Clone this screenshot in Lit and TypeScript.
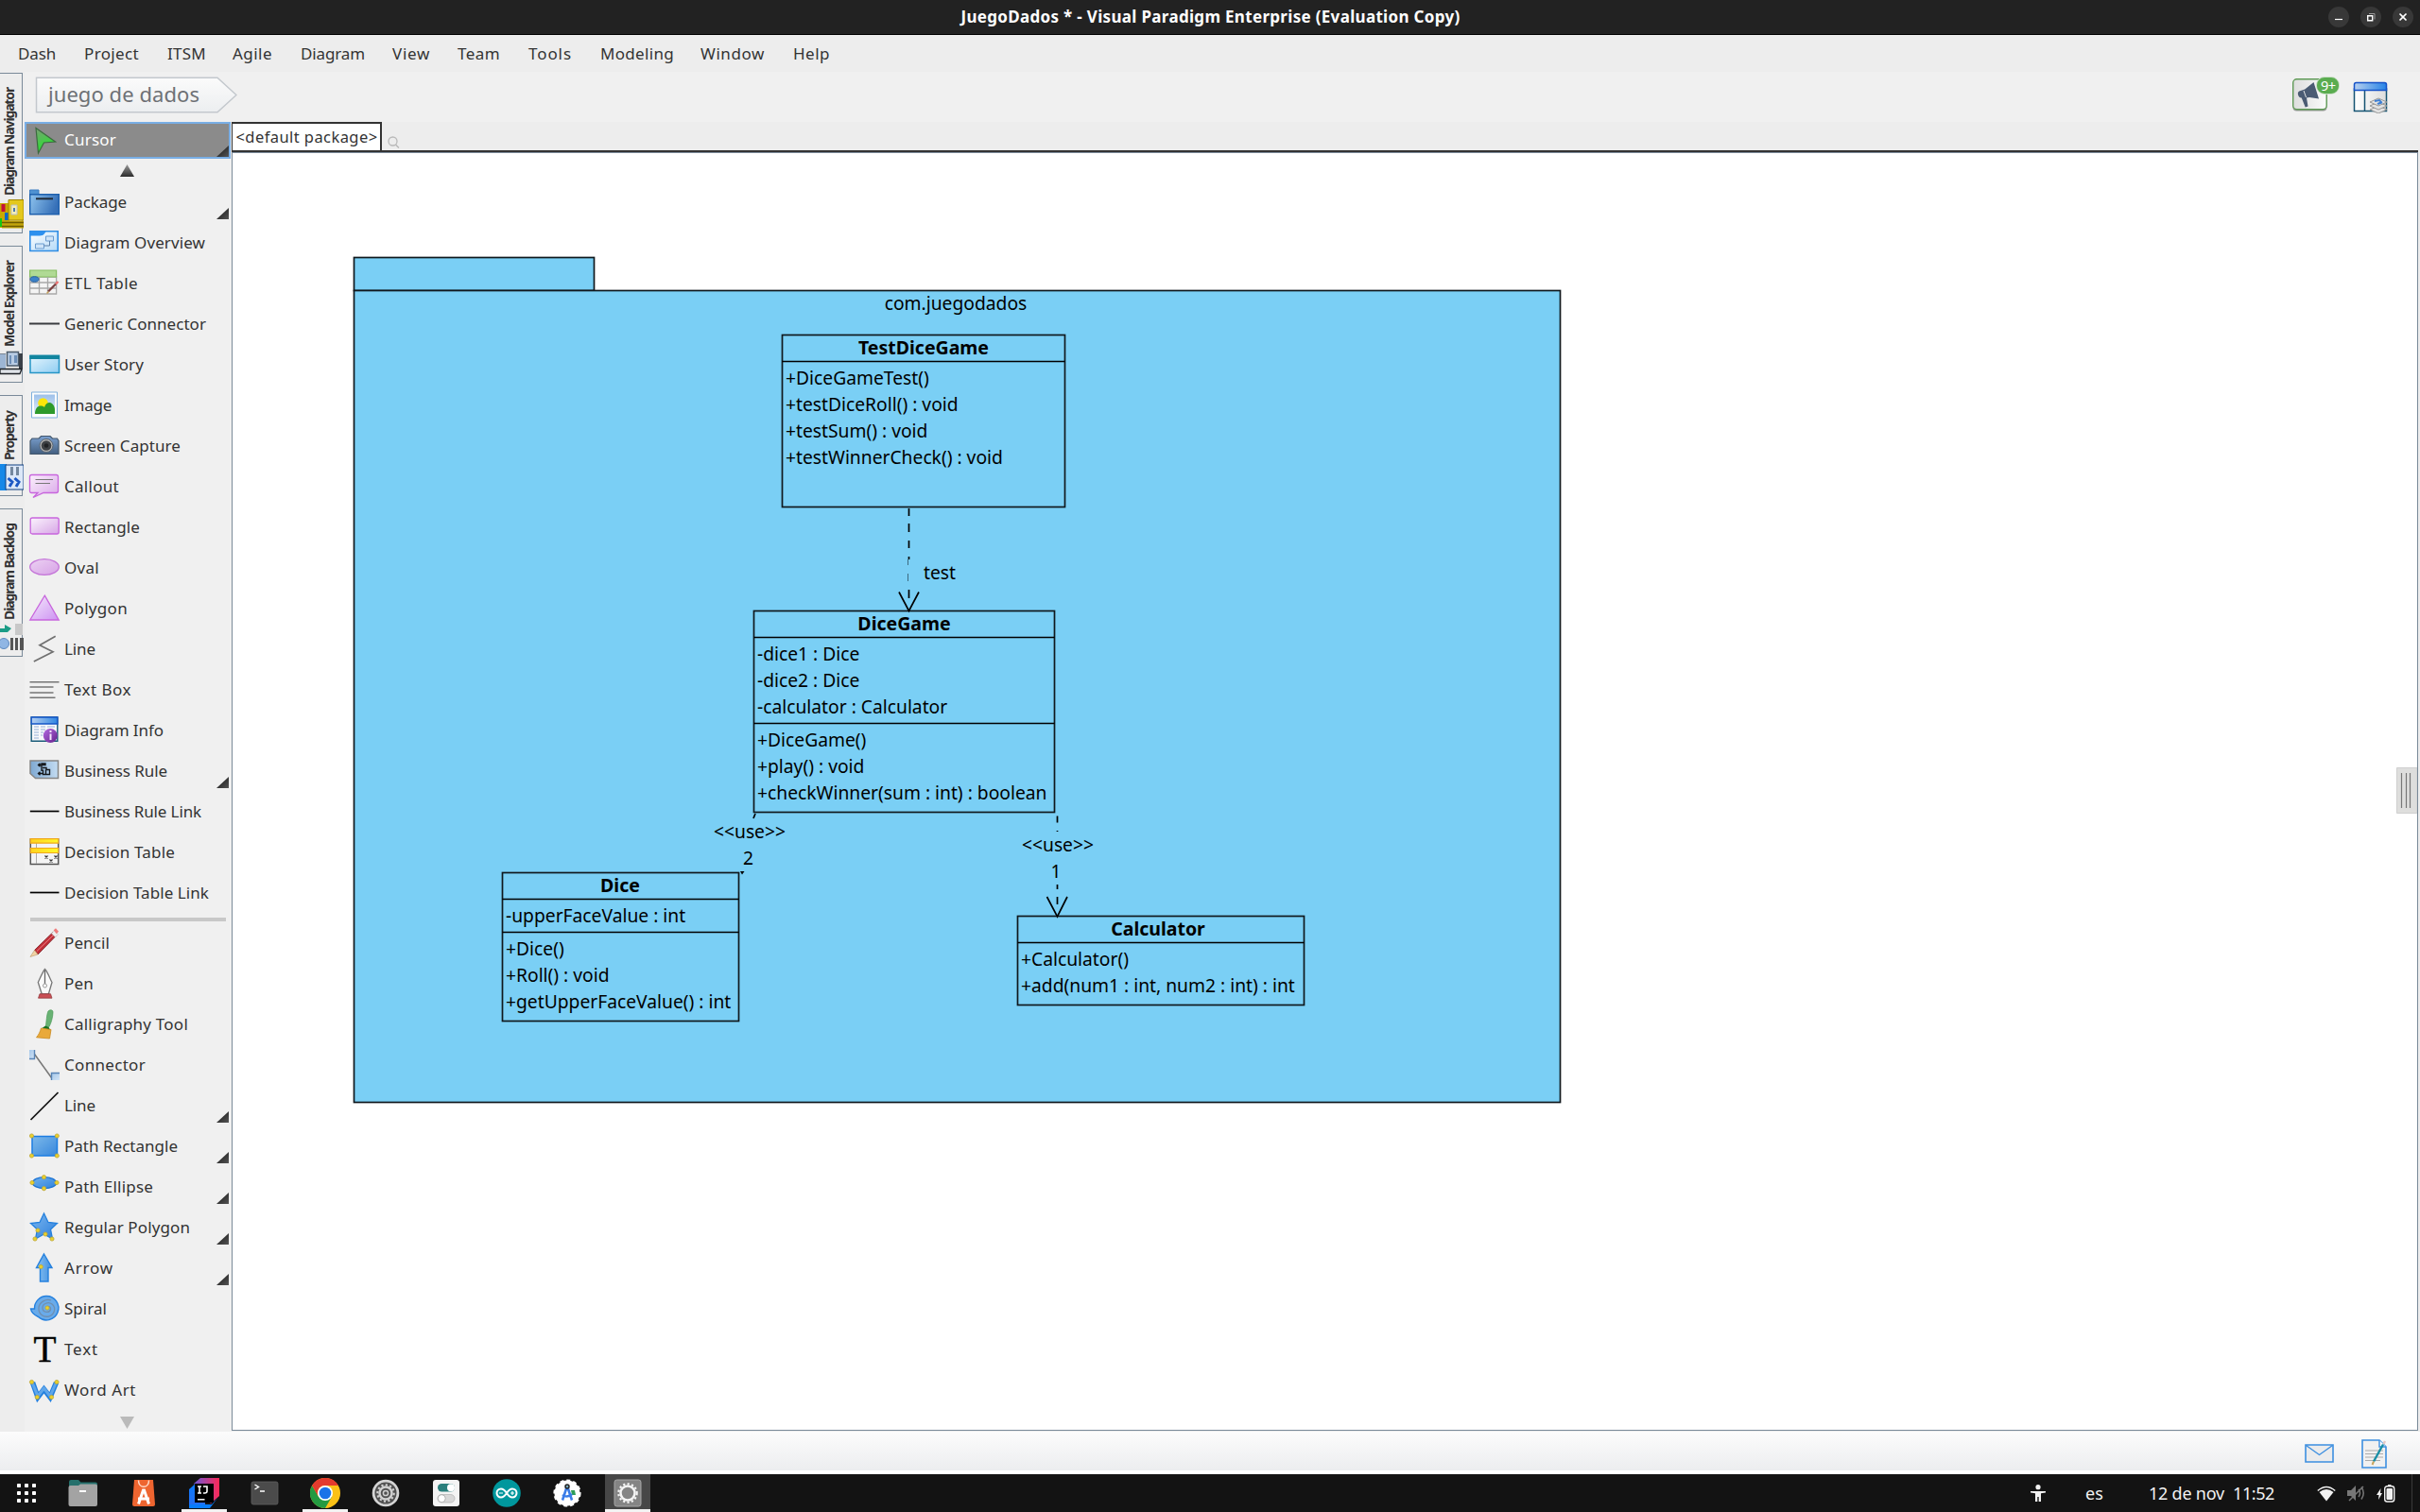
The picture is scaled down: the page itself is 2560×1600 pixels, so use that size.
import { LitElement, html, svg, css, nothing, TemplateResult, SVGTemplateResult } from "lit";
import { customElement, property } from "lit/decorators.js";

const UI_FONT = '"Noto Sans", "Open Sans", sans-serif';

const ruler = document.createElement("canvas").getContext("2d")!;

/** Letter spacing that makes a label occupy the given advance width. */
function tracking(text: string, width: number, size: number, weight = 400): string {
  ruler.font = `${weight} ${size}px ${UI_FONT}`;
  return `letter-spacing:${((width - ruler.measureText(text).width) / text.length).toFixed(3)}px`;
}

/* ---------- shared gradients ---------- */
const grad = (id: string, a: string, b: string, x2 = 1, y2 = 1) =>
  svg`<linearGradient id=${id} x1="0" y1="0" x2=${x2} y2=${y2}><stop offset="0" stop-color=${a}/><stop offset="1" stop-color=${b}/></linearGradient>`;

const knob = (x: number, y: number) =>
  svg`<circle cx=${x} cy=${y} r="2.1" fill="#ead12c" stroke="#bda638" stroke-width=".8"/>`;

const icons: Record<string, SVGTemplateResult> = {
  package: svg`<defs>${grad("g", "#8fc4ee", "#3670b8", 1, 0.3)}</defs>
    <path d="M.5 3h9.5v5h-9.5z" fill="#4f92d2" stroke="#3c7cc0"/>
    <path d="M.7 7.7h30.6v21.1H.7z" fill="url(#g)" stroke="#1f61ae" stroke-width="1.4"/>
    <path d="M7 12.3h18" stroke="#222c38" stroke-width="2"/>`,
  overview: svg`<defs>${grad("g", "#ffffff", "#b4daf8")}</defs>
    <path d="M.8 3.7h29.4v20.8H.8z" fill="url(#g)" stroke="#2f8de4" stroke-width="1.6"/>
    <path d="M1 3.5h17c-2 2-2 5-7 5H1z" fill="#2d90ee"/>
    <path d="M17.5 9h8v5h-8zM6.500 17h9v5h-9z" fill="#cfe4f8" stroke="#6b9cd0"/>
    <path d="M21.500 14v5h-6" fill="none" stroke="#5a7fa8"/>`,
  etl: svg`<path d="M.6 9h28v18H.6z" fill="#f4f4f4" stroke="#a8a8a8" stroke-width="1.3"/>
    <path d="M.6 2h28v7H.6z" fill="#b0da94" stroke="#86bd62" stroke-width="1.200"/>
    <path d="M1 15h28M1 21h28M10.500 9v18M19.500 9v18" stroke="#a8a8a8" stroke-width="1.3"/>
    <ellipse cx="5.500" cy="11.500" rx="4.500" ry="2.800" fill="#3c82c8" stroke="#225f9e"/>
    <path d="M20 24.500l8-8" stroke="#7a4040" stroke-width="2.300"/><path d="M28 16.500l2.500-2.500" stroke="#ee6f6f" stroke-width="2.300"/><path d="M18.500 26.500l2-2" stroke="#c9a45c" stroke-width="1.500"/>`,
  connector: svg`<path d="M0 15.500h32" stroke="#3a3c40" stroke-width="2"/>`,
  story: svg`<defs>${grad("g", "#e6f5fd", "#8fcdf2")}</defs>
    <path d="M1 6.500h30.500v18H1z" fill="url(#g)" stroke="#2595c6" stroke-width="1.500"/>
    <path d="M.3 5.700h31.700v4.300H.3z" fill="#11859f"/>`,
  image: svg`<defs>${grad("g", "#9cc0ea", "#e6effa", 0, 1)}</defs>
    <path d="M2.500 2h27v27h-27z" fill="#fdfdfd" stroke="#7fb0dc"/>
    <path d="M5 4.500h22v20.500H5z" fill="url(#g)"/>
    <circle cx="14.500" cy="13.500" r="5.300" fill="#fbe60a"/>
    <path d="M6 25c0-6 3-8.500 6-8.500 2 0 3 .5 4 1.500 1-3.500 3-5 5.500-5 3 0 5.500 4 5.500 7v5z" fill="#2e9a2a"/>`,
  camera: svg`<defs>${grad("g", "#7ba0cf", "#435f80", 0, 1)}</defs>
    <path d="M1 10.500l2-2.500h7l2.500-2.500h9.500L24.500 8h5l1.500 2.500v14H1z" fill="url(#g)" stroke="#43576c" stroke-width="1.200"/>
    <circle cx="18" cy="15.500" r="7" fill="#b5b5b5" stroke="#5a6673"/><circle cx="18" cy="15.500" r="5.300" fill="#3e4144"/><circle cx="18" cy="15.500" r="2.300" fill="#202224"/>`,
  callout: svg`<defs>${grad("g", "#fbf1fd", "#d9a7e8")}</defs>
    <path d="M2.500 3.500h26q2 0 2 2v15q0 2-2 2H15L4 27.500l5-5H2.500q-2 0-2-2v-15q0-2 2-2z" fill="url(#g)" stroke="#c866dd" stroke-width="1.300"/>
    <path d="M6.500 8.500h18.500M6.500 12.500h15.500" stroke="#777" stroke-width="1.200"/>`,
  rect: svg`<defs>${grad("g", "#fbf4fd", "#d7a5e6")}</defs>
    <rect x="1.200" y="6" width="30" height="17" rx="2" fill="url(#g)" stroke="#c866dd" stroke-width="1.300"/>`,
  oval: svg`<defs>${grad("g", "#ecd2f3", "#d7a2e6")}</defs>
    <ellipse cx="16" cy="15" rx="15.300" ry="8.300" fill="url(#g)" stroke="#c475d8" stroke-width="1.300"/>`,
  polygon: svg`<defs>${grad("g", "#f6ecfc", "#cd92f2")}</defs>
    <path d="M16.300 2.200L31.200 28H.8z" fill="url(#g)" stroke="#c866dd" stroke-width="1.300"/>`,
  zigzag: svg`<path d="M27.700 2.200L11 11.700l14 7L4.800 29" fill="none" stroke="#707070" stroke-width="1.700"/>`,
  textbox: svg`<path d="M.5 7.800H31.500M.5 13h25M.5 19h25M.5 24.200h27" stroke="#757575" stroke-width="1.400"/>`,
  info: svg`<defs>${grad("g", "#b5cff0", "#2f86e2", 1, 0)}${grad("h", "#b46ae0", "#63208c")}</defs>
    <path d="M2.200 2h27.600v25.300H2.200z" fill="#f7f8fa" stroke="#185a78" stroke-width="1.400"/>
    <path d="M2.200 2h27.600v7H2.200z" fill="url(#g)" stroke="#1556c8" stroke-width="1.400"/>
    <path d="M5 12h5M12 12h5M5 15h5M12 15h5M5 18h5M5 21h5M5 24h5M19 12h8M12 18h3M12 21h2" stroke="#b6c8e2" stroke-width="1.500"/>
    <circle cx="22.300" cy="21.500" r="7.500" fill="url(#h)"/><path d="M22.500 19.500v6.500M22.500 16v2" stroke="#f2e4fa" stroke-width="2"/>`,
  rule: svg`<defs>${grad("g", "#7fa9d2", "#c3dcf2", 1, 0)}</defs>
    <path d="M1 5h29.500v18.500H6.500L1 18.500z" fill="url(#g)" stroke="#858585" stroke-width="1.500"/>
    <path d="M9 9.500h8v-1.500h-4v8M9 18.500h5M14 12.500h4v2h3.500v5h-7v-5M17.500 14.500v5M11.500 7.800l-2 1.700 2 1.700M11.500 16.800l-2 1.700 2 1.700" fill="none" stroke="#15181c" stroke-width="1.400"/>`,
  link: svg`<path d="M.8 15.500h30.700" stroke="#000" stroke-width="1.700"/>`,
  decision: svg`<defs>${grad("g", "#ffd21e", "#fffa2a", 1, 0)}</defs>
    <path d="M1.300 2h29.400v26.500H1.300z" fill="#f4f4f4" stroke="#555" stroke-width="1.500"/>
    <path d="M7.500 2v26" stroke="#aaa"/>
    <path d="M1.200 1.700h29.600v4.500H1.200zM1.200 11.500h29.600v5H1.200z" fill="url(#g)" stroke="#f0a81e" stroke-width="1.200"/>
    <path d="M16.500 19.500l3 3m0-3l-3 3M26.500 19.500l3 3m0-3l-3 3M21.500 23.500l3 3m0-3l-3 3" stroke="#333" stroke-width="1.200"/>`,
  pencil: svg`<path d="M5.500 23.500L25 4.500l3.500 3.500L9 28z" fill="#c22f38" stroke="#83252b" stroke-width=".9"/>
    <path d="M8 24.500L26 7" stroke="#ef8288" stroke-width="1"/>
    <path d="M23.500 5.800l3-3 4 4-3 3z" fill="#efefef" stroke="#bdbdbd" stroke-width=".6"/><path d="M25.700 2.200L28 .2l3 3.500-2.200 2.500z" fill="#ef7d7d"/>
    <path d="M5.500 23.500L1 30.500 9 28z" fill="#f1d3a4" stroke="#b8996a" stroke-width=".6"/>`,
  pen: svg`<path d="M16.500.5C14 3.500 11 11 9.300 14.500l4 12.500h7l3.700-12.500C22 11 19.500 3.500 16.500.5z" fill="#fafafa" stroke="#777" stroke-width="1.300"/>
    <path d="M16.500 2v14.500" stroke="#666" stroke-width="1.300"/><circle cx="16.500" cy="18" r="2" fill="#fff" stroke="#999"/>
    <path d="M11 26.700h11.500l1.500 4.500H9.500z" fill="#c94f55" stroke="#8d3338" stroke-width=".7"/>`,
  brush: svg`<path d="M20 2c2-2 5-1.500 5 1 0 5-2 12-4 15.500-1.500 2-4 1.500-3.500-.5C18 13 18.500 5 20 2z" fill="#68b273" stroke="#4a9a57" stroke-width=".7"/>
    <path d="M17 17.500l3.500 1.500 2 3.500-9-2.500z" fill="#157020"/>
    <path d="M12.500 20l10.500 1.500-1.500 9.500-14-1.200c2.500-2.800 4-6.300 5-9.800z" fill="#e9a93a" stroke="#c98a1f" stroke-width=".8"/>`,
  nodes: svg`<defs>${grad("g", "#a5c8ea", "#d2e3f5")}</defs>
    <path d="M5.500 4.500l18 25" stroke="#777" stroke-width="1.500"/>
    <path d="M0 0h5.500v9.500H0z" fill="url(#g)"/><path d="M5.500 0v9.500H0" fill="none" stroke="#5884b6" stroke-width="1.400"/>
    <path d="M23.500 24.500H32V32h-8.500z" fill="url(#g)"/><path d="M32 24.500h-8.500V32" fill="none" stroke="#5884b6" stroke-width="1.400"/>`,
  line: svg`<path d="M1.500 31L30.500 2" stroke="#111" stroke-width="1.700"/>`,
  prect: svg`<defs>${grad("g", "#7db9ea", "#3787dc")}</defs>
    <path d="M3 5.500h26.500v20.500H3z" fill="url(#g)" stroke="#1c7de2" stroke-width="1.500"/>${knob(2.5, 5)}${knob(29.3, 5)}${knob(2.5, 26)}${knob(29.3, 26)}`,
  pellipse: svg`<defs>${grad("g", "#6fb1ec", "#2f82dc")}</defs>
    <ellipse cx="16" cy="11.700" rx="12.500" ry="6" fill="url(#g)" stroke="#1c74d4" stroke-width="1.300"/>${knob(3, 11.500)}${knob(29, 11.500)}${knob(15.500, 5.700)}${knob(15.500, 17.700)}`,
  star: svg`<defs>${grad("g", "#7db7ee", "#2c7fdc")}</defs>
    <path d="M15.500 1l4.500 9.500 9.500 1-7 6.500 2 10-9-5-9 5 2-10-7-6.500 9.500-1z" fill="url(#g)" stroke="#2480de" stroke-width="1.300"/>${knob(9, 19)}${knob(17, 23)}${knob(6, 28)}${knob(24, 28)}`,
  arrow: svg`<defs>${grad("g", "#8cc3f2", "#3f8fe0", 1, 0)}</defs>
    <path d="M15.500 1L24 15.500h-4V30h-8.500V15.500H7.500z" fill="url(#g)" stroke="#2480de" stroke-width="1.400"/>${knob(12.300, 14.500)}`,
  spiral: svg`<path d="M18 2.500a12.700 12.700 0 1 1-8.500 22C5 22.500 2 19 1.500 16h4C5 9 11 2.500 18 2.500z" fill="#69abea" stroke="#2480de" stroke-width="1.400"/>
    <path d="M18 15c1-3 5-1 4.500 1.500-.8 4-8 4-8.500-1-.3-5 6-7.500 10-4.500 5 4 2.500 11.500-3.500 13-6 1.200-11-3-10.500-9 .5-6.500 8-10 13-8" fill="none" stroke="#6f8fb0" stroke-width="1.300"/>${knob(19, 15)}`,
  text: svg`<text x="4.500" y="28.500" font-family="'Liberation Serif', serif" font-size="41" textLength="24" lengthAdjust="spacingAndGlyphs" fill="#000" stroke="#000" stroke-width=".5">T</text>`,
  wordart: svg`<path d="M3.500 8l5.500 15.500 6.500-8.500 6.500 8.500L28.500 8" fill="none" stroke="#2480de" stroke-width="5.500"/><path d="M3.500 9l5.500 13.500 6.500-8.500 6.500 8.500L28 9" fill="none" stroke="#5fa6ea" stroke-width="3"/>${knob(2.500, 7.500)}${knob(29, 7.500)}${knob(8.300, 23.500)}${knob(23.500, 23.500)}`,
};

type Tool = [icon: string, label: string, width: number, more?: boolean];

const tools: Tool[] = [
  ["package", "Package", 66, true],
  ["overview", "Diagram Overview", 149],
  ["etl", "ETL Table", 78],
  ["connector", "Generic Connector", 150],
  ["story", "User Story", 84],
  ["image", "Image", 50],
  ["camera", "Screen Capture", 123],
  ["callout", "Callout", 58],
  ["rect", "Rectangle", 80],
  ["oval", "Oval", 37],
  ["polygon", "Polygon", 67],
  ["zigzag", "Line", 33],
  ["textbox", "Text Box", 71],
  ["info", "Diagram Info", 105],
  ["rule", "Business Rule", 109, true],
  ["link", "Business Rule Link", 145],
  ["decision", "Decision Table", 117],
  ["link", "Decision Table Link", 153],
];

const drawing: Tool[] = [
  ["pencil", "Pencil", 48],
  ["pen", "Pen", 31],
  ["brush", "Calligraphy Tool", 131],
  ["nodes", "Connector", 86],
  ["line", "Line", 33, true],
  ["prect", "Path Rectangle", 120, true],
  ["pellipse", "Path Ellipse", 94, true],
  ["star", "Regular Polygon", 133, true],
  ["arrow", "Arrow", 52, true],
  ["spiral", "Spiral", 45],
  ["text", "Text", 36],
  ["wordart", "Word Art", 76],
];

@customElement("palette-item")
class PaletteItem extends LitElement {
  @property() icon = "";
  @property() label = "";
  @property({ type: Number }) span = 0;
  @property({ type: Boolean }) more = false;

  static styles = css`
    :host { display: flex; align-items: center; height: 43px; flex: none; padding: 0 0 2px 5px; box-sizing: border-box; }
    .icon { width: 32px; height: 32px; flex: none; overflow: visible; }
    .label { flex: 1; padding-left: 5px; font: 17px/24px "Noto Sans", "Open Sans", sans-serif; color: #333; white-space: nowrap; }
    .more { width: 13px; height: 12px; align-self: flex-end; margin: 0 3px 2px 0; flex: none; }
  `;

  render() {
    return html`<svg class="icon" viewBox="0 0 32 32">${icons[this.icon]}</svg>
      <span class="label" style=${tracking(this.label, this.span, 17)}>${this.label}</span>
      ${this.more ? html`<svg class="more" viewBox="0 0 13 12">${cornerMark}</svg>` : nothing}`;
  }
}

const cornerMark = svg`<defs>${grad("c", "#111", "#555")}</defs><path d="M0 12L13 0v12z" fill="url(#c)"/>`;

/* ---------- class diagram ---------- */
type Row = [text: string, y: number];
interface ClassBox { name: string; cx: number; x: number; y: number; r: number; b: number; lines: number[]; nameY: number; tx: number; rows: Row[]; }

const classes: ClassBox[] = [
  { name: "TestDiceGame", cx: 977, x: 827.5, y: 354.5, r: 1126.500, b: 536.500, lines: [382.500], nameY: 375, tx: 831,
    rows: [["+DiceGameTest()", 407], ["+testDiceRoll() : void", 435], ["+testSum() : void", 463], ["+testWinnerCheck() : void", 491]] },
  { name: "DiceGame", cx: 956.500, x: 797.500, y: 646.500, r: 1115.500, b: 859.500, lines: [674.500, 765.500], nameY: 667, tx: 801,
    rows: [["-dice1 : Dice", 699], ["-dice2 : Dice", 727], ["-calculator : Calculator", 755], ["+DiceGame()", 790], ["+play() : void", 818], ["+checkWinner(sum : int) : boolean", 846]] },
  { name: "Dice", cx: 656, x: 531.500, y: 923.500, r: 781.500, b: 1080.500, lines: [951.500, 986.500], nameY: 944, tx: 535,
    rows: [["-upperFaceValue : int", 976], ["+Dice()", 1011], ["+Roll() : void", 1039], ["+getUpperFaceValue() : int", 1067]] },
  { name: "Calculator", cx: 1225, x: 1076.500, y: 969.500, r: 1379.500, b: 1063.500, lines: [997.500], nameY: 990, tx: 1080,
    rows: [["+Calculator()", 1022], ["+add(num1 : int, num2 : int) : int", 1050]] },
];

@customElement("class-diagram")
class ClassDiagram extends LitElement {
  static styles = css`
    :host { display: block; flex: 1; min-height: 0; }
    .sheet { display: block; width: 2311px; height: 1350px; }
    .shape { fill: #7acff5; stroke: #10181d; stroke-width: 1.7; }
    .edge { fill: none; stroke: #000; stroke-width: 1.7; }
    .faint { stroke: #3c6b80; stroke-width: 1; }
    .text { font: 19.25px "Noto Sans", "Open Sans", sans-serif; fill: #000; white-space: pre; }
    .mid { text-anchor: middle; }
    .name { font-weight: 700; font-size: 19.5px; }
  `;

  render() {
    return html`<svg class="sheet" viewBox="246 162 2311 1350">
      <rect class="shape" x="374.5" y="272.5" width="254" height="35"/>
      <rect class="shape" x="374.5" y="307.500" width="1276" height="859"/>
      <text class="text mid" x="1011" y="328">com.juegodados</text>
      ${classes.map((c) => svg`
        <rect class="shape" x=${c.x} y=${c.y} width=${c.r - c.x} height=${c.b - c.y}/>
        ${c.lines.map((y) => svg`<path class="edge" d="M${c.x} ${y}H${c.r}"/>`)}
        <text class="text mid name" x=${c.cx} y=${c.nameY}>${c.name}</text>
        ${c.rows.map(([t, y]) => svg`<text class="text" x=${c.tx} y=${y}>${t}</text>`)}`)}
      <path class="edge" d="M961.500 538v8M961.500 554v9M961.500 572v8M961.500 589v3M961.500 624v9M951 626.500l10.500 20 10.500-20"/>
      <path class="edge faint" d="M960.500 592v6M960.500 607v8"/>
      <text class="text" x="977" y="613">test</text>
      <path class="edge" d="M799 861l-2 5M1118.500 863.500v7M1118.500 879v1M1118.500 936v5M1118.500 949v8M1107.500 949l11 21 10.500-21"/>
      <path d="M783 922h4.500l-2.500 3.500z"/>
      <text class="text mid" x="793" y="887">&lt;&lt;use&gt;&gt;</text>
      <text class="text mid" x="791.500" y="915">2</text>
      <text class="text mid" x="1119" y="901">&lt;&lt;use&gt;&gt;</text>
      <text class="text mid" x="1117" y="929">1</text>
    </svg>`;
  }
}

/* ---------- side tabs ---------- */
const tabIcons: Record<string, SVGTemplateResult> = {
  navigator: svg`<path d="M0 4h10v26H0z" fill="#c9a800"/><path d="M1.500 5h4v8h-4z" fill="#c4103c"/><path d="M0 20h2v9H0z" fill="#12c812"/><path d="M5 14h5v8H5z" fill="#0a68c8"/><path d="M9 .5h16V22H9z" fill="#e4c81c" stroke="#a08600"/><path d="M12 6h6v10h-6z" fill="#f6eeb4" stroke="#b8c0c8"/><path d="M14 9h2v4h-2z" fill="#4a78b0"/><path d="M2 22.500h23v8H2z" fill="#c4a60c"/><path d="M2 24.500h23M2 28.500h23" stroke="#6e5c00" stroke-width="1.500"/>`,
  model: svg`<path d="M0 3h6v16H0z" fill="#9db6d4"/><path d="M0 3.500h6" stroke="#7a8694"/><path d="M7.500 1.500h12V16h-12z" fill="#b8cce4" stroke="#4a5a6a" stroke-width="1.500"/><path d="M10 5h2v9h-2zM15 5h3v8h-3z" fill="#6d8fb8"/><path d="M20 3h4v16h-4z" fill="#3a4048"/><path d="M0 19.500h23l-2 5H0z" fill="#dfe3e8" stroke="#1e2226" stroke-width="1.300"/>`,
  property: svg`<path d="M0 0h7v28H0z" fill="#1688e8"/><path d="M6 1h19v26H6z" fill="#dce8f8" stroke="#0e3e80"/><path d="M11 3h3v9h-3zM17 3h3v9h-3z" fill="#74889e"/><path d="M8.500 15l4.500 4-3 5M15.500 15l4.500 4-3 5" fill="none" stroke="#1c58c4" stroke-width="3"/>`,
  backlog: svg`<path d="M0 5h5V1l7 4-4 4H0z" fill="#1b9c86"/><path d="M16 0h8v12h-8z" fill="#c8c8c8"/><circle cx="4" cy="21" r="5.500" fill="#90b6e4" stroke="#5e8ac0"/><path d="M11 15h3v13h-3zM16 15h3v13h-3zM21 15h4v13h-4z" fill="#555"/>`,
};

const sideTabs: { id: string; label: string; height: number; width: number; icon: number }[] = [
  { id: "navigator", label: "Diagram Navigator", height: 170, width: 114, icon: 31 },
  { id: "model", label: "Model Explorer", height: 145, width: 91, icon: 29 },
  { id: "property", label: "Property", height: 107, width: 52, icon: 29 },
  { id: "backlog", label: "Diagram Backlog", height: 157, width: 102, icon: 30 },
];

const menus: [string, number, number][] = [
  ["Dash", 40, 70], ["Project", 58, 88], ["ITSM", 41, 69], ["Agile", 42, 72], ["Diagram", 68, 97], ["View", 40, 69],
  ["Team", 45, 75], ["Tools", 46, 76], ["Modeling", 78, 106], ["Window", 68, 98], ["Help", 39, 60],
];

const gear = (cx: number, cy: number, r: number, color: string) =>
  svg`<circle cx=${cx} cy=${cy} r=${r} fill="none" stroke=${color} stroke-width="2.500"/><circle cx=${cx} cy=${cy} r=${r + 2.2} fill="none" stroke=${color} stroke-width="2.200" stroke-dasharray="2.200 2.300"/>`;

const dock: { name: string; run?: boolean; active?: boolean; art: SVGTemplateResult }[] = [
  { name: "files", art: svg`<path d="M1 4q0-2 2-2h8l2.500 2.500H29q2 0 2 2V12H1z" fill="#25706c"/><path d="M.500 10q0-2 2-2H11l2-1.500h16q2 0 2 2V28q0 2-2 2H2.500q-2 0-2-2z" fill="#a3a3a3"/><path d="M12 14h7" stroke="#fff" stroke-width="2"/>` },
  { name: "software", art: svg`<path d="M6 2h20l2 26q0 2-2 2H6q-2 0-2-2z" fill="#ee6530"/><path d="M10.500 2.500c0 9 11 9 11 0" fill="none" stroke="#ffd9c8" stroke-width="1.500"/><path d="M10.500 27.500L15.500 13h1l5 14.500M10 22h12" fill="none" stroke="#fff" stroke-width="3"/>` },
  { name: "idea", run: true, art: svg`<defs>${grad("i", "#087cfa", "#2a6cf0", 0, 1)}${grad("j", "#6b57d8", "#fe2857", 1, 0)}</defs><path d="M0 12L9 4l8 8v20L0 29z" fill="url(#i)"/><path d="M0 28h24l8-9-1 1-9 12H0z" fill="#087cfa"/><path d="M5 6l7-6h20v19l-9 8z" fill="url(#j)"/><path d="M6 6h20v20H6z" fill="#000"/><path d="M9 9h4M11 9v7M9 16h4M15 9h4v5q0 2-2.500 2H15" fill="none" stroke="#fff" stroke-width="1.600"/><path d="M9 22.800h7.500" stroke="#fff" stroke-width="1.500"/>` },
  { name: "terminal", art: svg`<rect x="2" y="4" width="28" height="24" rx="2" fill="#4b4b4b" stroke="#606060" stroke-width=".8"/><path d="M5.500 7l4 2.500-4 2.500M11 14h5" fill="none" stroke="#fff" stroke-width="1.400"/>` },
  { name: "chrome", run: true, art: svg`<circle cx="16" cy="16" r="16" fill="#fbc116"/><path d="M16 32l6.900-12H9.100L2.100 8A16 16 0 0 0 16 32z" fill="#249a41"/><path d="M2.100 8a16 16 0 0 1 27.800 0H16a8 8 0 0 0-7 12z" fill="#e33b2e"/><circle cx="16" cy="16" r="8" fill="#fff"/><circle cx="16" cy="16" r="6.300" fill="#1a73e8"/>` },
  { name: "settings", art: svg`<circle cx="16" cy="16" r="14.300" fill="#d4d4d4"/><circle cx="16" cy="16" r="11.500" fill="#505050"/>${gear(16, 16, 6.500, "#d0d0d0")}<circle cx="16" cy="16" r="2.600" fill="none" stroke="#d0d0d0" stroke-width="1.500"/>` },
  { name: "tweaks", art: svg`<rect x="2" y="2" width="28" height="28" rx="3" fill="#f4f4f4"/><rect x="7" y="6" width="18" height="8.500" rx="4.200" fill="#2b7f7c"/><circle cx="21" cy="10.200" r="4" fill="#fff"/><rect x="7" y="17.500" width="18" height="8.500" rx="4.200" fill="#d8d8d8" stroke="#aaa" stroke-width=".6"/><circle cx="11.200" cy="21.700" r="4" fill="#fff" stroke="#999" stroke-width=".7"/>` },
  { name: "arduino", art: svg`<circle cx="16" cy="16" r="14.800" fill="#00979d"/><path d="M16 16c-2-3-4-4.500-6-4.500a4.500 4.500 0 0 0 0 9c2 0 4-1.500 6-4.500s4-4.500 6-4.500a4.500 4.500 0 0 1 0 9c-2 0-4-1.500-6-4.500z" fill="none" stroke="#fff" stroke-width="2"/><path d="M8 16h4M20 16h4M22 14v4" stroke="#fff" stroke-width="1.200"/>` },
  { name: "studio", art: svg`<circle cx="16" cy="16" r="13.500" fill="#fff"/><circle cx="16" cy="16" r="13.600" fill="none" stroke="#fff" stroke-width="2" stroke-dasharray="4 3"/><path d="M20 13h4l1 5h-4z" fill="#2f9e5a"/><path d="M15.500 10L11 23.500M16.500 10L21 23.500M11 18c4 2.500 7 2 10-1" fill="none" stroke="#3b7de8" stroke-width="2.600"/><circle cx="16" cy="9" r="2" fill="#7ab" stroke="#222" stroke-width="1.500"/>` },
  { name: "app", run: true, active: true, art: svg`<rect x="2" y="2" width="28" height="28" rx="2.500" fill="#848484" stroke="#a8a8a8"/>${gear(16, 16, 7.500, "#f4f4f4")}` },
];

@customElement("app-root")
class AppRoot extends LitElement {
  static styles = css`
    :host { display: flex; flex-direction: column; width: 2560px; height: 1600px; overflow: hidden; background: #ededed; font-family: "Noto Sans", "Open Sans", sans-serif; color: #333; }
    svg { display: block; flex: none; }
    .title { display: grid; grid-template-columns: 1fr auto 1fr; align-items: center; height: 36px; background: #222; border-bottom: 1px solid #000; flex: none; }
    .title-text { grid-column: 2; font-size: 17px; line-height: 24px; font-weight: 700; color: #fff; white-space: nowrap; padding-left: 1px; }
    .win { display: flex; gap: 12px; justify-content: flex-end; padding-right: 7px; }
    .menu { display: flex; align-items: center; height: 39px; padding-left: 19px; flex: none; font-size: 17px; line-height: 24px; }
    .menu-cell { white-space: nowrap; box-sizing: border-box; }
    .main { display: flex; flex: 1; min-height: 0; }
    .side { display: flex; flex-direction: column; gap: 13px; width: 26px; padding-top: 1px; flex: none; box-sizing: border-box; }
    .side-tab { display: flex; flex-direction: column; justify-content: flex-end; width: 24px; box-sizing: border-box; border: solid #7a8a99; border-width: 1px 1px 1px 0; flex: none; padding-bottom: 4px; gap: 4px; }
    .side-label { writing-mode: vertical-rl; transform: rotate(180deg); font-size: 14px; line-height: 22px; font-weight: 700; white-space: nowrap; width: 22px; margin-left: -1px; }
    .work { display: flex; flex-direction: column; flex: 1; min-width: 0; }
    .toolbar { display: flex; align-items: center; height: 53px; background: #f0f0f0; flex: none; padding: 0 0 5px 11px; box-sizing: border-box; }
    .crumb { display: grid; align-items: center; }
    .crumb > * { grid-area: 1 / 1; }
    .crumb-text { font-size: 22px; line-height: 30px; color: #6e7175; padding: 0 0 2px 14px; white-space: nowrap; }
    .actions { display: flex; gap: 14px; margin-left: auto; padding-right: 34px; }
    .body { display: flex; flex: 1; min-height: 0; }
    .palette { display: flex; flex-direction: column; width: 219px; background: #f0f0f0; flex: none; }
    .cursor { display: flex; align-items: center; height: 39px; width: 218px; box-sizing: border-box; border: 2px solid #79aee5; background: #8b8b8b; flex: none; padding-left: 8px; }
    .cursor-label { flex: 1; color: #fff; font-size: 17px; line-height: 24px; padding: 0 0 2px 8px; }
    .cursor-more { align-self: flex-end; }
    .scroll { display: flex; justify-content: center; align-items: center; height: 25px; padding-right: 2px; flex: none; }
    .scroll-end { height: 22px; padding-top: 3px; box-sizing: border-box; }
    .rule { height: 4px; background: #c8c8c8; margin: 4px 6px 2px; flex: none; }
    .editor { display: flex; flex-direction: column; flex: 1; min-width: 0; }
    .tabs { display: flex; height: 30px; flex: none; border-bottom: 2px solid #333; margin-right: 2px; }
    .tab { display: flex; align-items: center; justify-content: center; width: 159px; box-sizing: border-box; border: 2px solid #333; border-bottom: 0; border-left-width: 1px; background: #fff; font-size: 16.500px; line-height: 22px; white-space: nowrap; padding-left: 1px; }
    .search { margin: 15px 0 0 6px; }
    .canvas { display: flex; flex: 1; min-height: 0; position: relative; background: #fff; border: 1px solid #7a8a99; margin-right: 2px; }
    .handle { position: absolute; right: 0; top: 650px; }
    .foot { height: 1px; flex: none; }
    .status { display: flex; align-items: center; justify-content: flex-end; gap: 29px; height: 41px; flex: none; background: linear-gradient(#fcfcfc, #ecedef); border-bottom: 4px solid #fff; padding-right: 34px; box-sizing: content-box; }
    .mail { margin-top: 4px; }
    .note { margin-top: 5px; }
    .dock { display: flex; align-items: stretch; height: 40px; background: #131313; flex: none; padding-left: 4px; }
    .apps { display: flex; align-items: center; justify-content: center; width: 48px; margin-right: 12px; }
    .dock-item { display: flex; align-items: center; justify-content: center; width: 48px; margin-right: 16px; box-sizing: border-box; }
    .running { box-shadow: inset 0 -3px #f3f3f3; }
    .active { background: #474747; }
    .tray { display: flex; align-items: center; margin-left: auto; color: #f2f2f2; font-size: 18px; line-height: 24px; white-space: pre; }
    .lang { margin-left: 42px; }
    .date { margin-left: 48px; }
    .time { margin-left: 9px; }
    .wifi { margin-left: 45px; }
    .mute { margin-left: 12px; }
    .battery { margin-left: 12px; }
    .edge { width: 8px; height: 40px; border-left: 1px solid #3a3a3a; margin-left: 17px; }
  `;

  private item([icon, label, width, more]: Tool): TemplateResult {
    return html`<palette-item .icon=${icon} .label=${label} .span=${width} .more=${!!more}></palette-item>`;
  }

  render() {
    const title = "JuegoDados * - Visual Paradigm Enterprise (Evaluation Copy)";
    return html`
      <header class="title">
        <span class="title-text" style=${tracking(title, 528, 17, 700)}>${title}</span>
        <div class="win">
          ${[svg`<path d="M7 13.500h8" stroke="#fff" stroke-width="1.200"/>`,
             svg`<path d="M7.700 9.700h5v5h-5z" fill="none" stroke="#fff" stroke-width="1.400"/><path d="M9 7.500h6v6" fill="none" stroke="#999"/>`,
             svg`<path d="M7.500 7.500l7 7m0-7l-7 7" stroke="#fff" stroke-width="1.700"/>`].map(
            (g) => html`<svg width="22" height="22"><circle cx="11" cy="11" r="11" fill="#383838"/>${g}</svg>`)}
        </div>
      </header>
      <nav class="menu">
        ${menus.map(([m, w, cell]) => html`<span class="menu-cell" style="width:${cell}px;${tracking(m, w, 17)}">${m}</span>`)}
      </nav>
      <div class="main">
        <aside class="side">
          ${sideTabs.map((t) => html`<div class="side-tab" style="height:${t.height}px">
            <span class="side-label" style=${tracking(t.label, t.width, 14, 700)}>${t.label}</span>
            <svg width="25" height=${t.icon}>${tabIcons[t.id]}</svg></div>`)}
        </aside>
        <section class="work">
          <div class="toolbar">
            <div class="crumb">
              <svg width="214" height="40"><defs>${grad("b", "#fbfbfb", "#eceef0", 0, 1)}</defs><path d="M1.500 2.300h191.500L213 20.500 193 38.800H1.500z" fill="url(#b)" stroke="#c3c8cd" stroke-width="1.500"/></svg>
              <span class="crumb-text" style=${tracking("juego de dados", 160, 22)}>juego de dados</span>
            </div>
            <div class="actions">
              <svg width="50" height="40" viewBox="2425 80 50 40"><defs>${grad("m", "#ddd", "#fbfbfb", 1, 0)}</defs>
                <rect x="2425.500" y="84.500" width="36" height="33" rx="4" fill="#9a9a9a"/>
                <rect x="2425.700" y="83.700" width="35.500" height="32" rx="4" fill="url(#m)" stroke="#5f9a56" stroke-width="1.400"/>
                <path d="M2447.500 87l5.500 17.500-10-1.500-3 .5 1.500 9-2.800 1-4-10c-3 .5-5.500-5.500-2.500-7l6-2z" fill="#4b5b73"/><path d="M2437 96l2.500 7" stroke="#e4e4e4" stroke-width="1"/>
                <rect x="2450.500" y="81.500" width="24" height="18" rx="8.500" fill="#5aac50" stroke="#d8e6d6" stroke-width=".8"/>
                <text x="2455" y="96" font-size="14.500" fill="#fff" font-family="Noto Sans, sans-serif" textLength="16">9+</text></svg>
              <svg width="37" height="40" viewBox="2489 80 37 40"><defs>${grad("l", "#b7d0ef", "#2683e6", 1, 0)}${grad("n", "#fff", "#ddd", 1, 0)}</defs>
                <path d="M2490.500 94h34v23.500h-34z" fill="url(#n)" stroke="#145372" stroke-width="1.500"/><path d="M2501.500 95v22" stroke="#145372" stroke-width="1.500"/>
                <path d="M2490.500 95.500v-6q0-2 2-2h30q2 0 2 2v6z" fill="url(#l)" stroke="#1552c8" stroke-width="1.500"/>
                <g fill="#e2e2e2" stroke="#8d8d8d" stroke-width=".9"><path d="M2507 116l9-4 9 4-9 4z"/><path d="M2507 112l9-4 9 4-9 4z"/><path d="M2507 108l9-4 9 4-9 4z"/></g><path d="M2512 107l5-1 2 2-4 2M2516 110l4-1.500" stroke="#3d7ed2" stroke-width="1.800" fill="none"/></svg>
            </div>
          </div>
          <div class="body">
            <div class="palette">
              <div class="cursor">
                <svg width="24" height="30" viewBox="0 0 24 30"><defs>${grad("k", "#7d9c78", "#22e82a", 0.3, 1)}</defs><path d="M2 1.500L22.500 16l-12 1L4.500 28z" fill="url(#k)" stroke="#3b6a3e" stroke-width="1.200"/></svg>
                <span class="cursor-label" style=${tracking("Cursor", 55, 17)}>Cursor</span>
                <svg class="cursor-more" width="13" height="12">${cornerMark}</svg>
              </div>
              <div class="scroll"><svg width="15" height="13"><defs>${grad("u", "#999", "#2c2c2c", 0, 1)}</defs><path d="M7.500 0L15 13H0z" fill="url(#u)"/></svg></div>
              ${tools.map((t) => this.item(t))}
              <div class="rule"></div>
              ${drawing.map((t) => this.item(t))}
              <div class="scroll scroll-end"><svg width="15" height="13"><path d="M7.500 13L15 0H0z" fill="#bababa"/></svg></div>
            </div>
            <div class="editor">
              <div class="tabs">
                <div class="tab"><span style=${tracking("<default package>", 150, 16.5)}>&lt;default package&gt;</span></div>
                <svg class="search" width="14" height="14"><circle cx="5.500" cy="5.500" r="4.500" fill="none" stroke="#b9b9b9" stroke-width="1.300"/><path d="M8.500 9l3.500 3.500" stroke="#b9b9b9" stroke-width="1.500"/></svg>
              </div>
              <div class="canvas">
                <class-diagram></class-diagram>
                <svg class="handle" width="22" height="49"><path d="M.5.500H22v48H.5z" fill="#dededd" stroke="#cfcfcf"/><path d="M5.500 6v37M10.500 6v37M14.500 6v37" stroke="#777" stroke-width="1.200"/></svg>
              </div>
              <div class="foot"></div>
            </div>
          </div>
        </section>
      </div>
      <footer class="status">
        <svg class="mail" width="31" height="20"><path d="M1 1h29v18H1z" fill="#ebebec" stroke="#3d8fe0" stroke-width="1.600"/><path d="M1.500 1.500l14 10 14-10" fill="none" stroke="#3d8fe0" stroke-width="1.400"/></svg>
        <svg class="note" width="28" height="31"><path d="M1 1h18l7 7v22H1z" fill="#f1f1f1" stroke="#3d8fe0" stroke-width="1.600"/><path d="M19 1v7h7" fill="#fff" stroke="#3d8fe0" stroke-width="1.400"/><path d="M4 12h19M4 15.500h19M4 19h19M4 22.500h16" stroke="#aaa"/><path d="M13 23.500l10-18" stroke="#188ea5" stroke-width="2.400"/><path d="M11.500 27l1.500-3.500" stroke="#c9a45c" stroke-width="2"/><path d="M23.500 5l1.500-3" stroke="#e5c9c4" stroke-width="2.400"/></svg>
      </footer>
      <footer class="dock">
        <div class="apps"><svg width="20" height="20">${[0, 8, 16].map((x) => [0, 8, 16].map((y) => svg`<rect x=${x} y=${y} width="4" height="4" rx=".8" fill="#fff"/>`))}</svg></div>
        ${dock.map((d) => html`<div class="dock-item ${d.run ? "running" : ""} ${d.active ? "active" : ""}"><svg width="32" height="32">${d.art}</svg></div>`)}
        <div class="tray">
          <svg width="16" height="18"><circle cx="8" cy="2.700" r="2.600" fill="#f2f2f2"/><path d="M0 7h16v1.600l-5 .6V18H8.700v-5H7.300v5H5V9.200l-5-.6z" fill="#f2f2f2"/></svg>
          <span class="lang" style=${tracking("es", 19, 18)}>es</span>
          <span class="date" style=${tracking("12 de nov", 80, 18)}>12 de nov</span>
          <span class="time" style=${tracking("11:52", 44, 18)}>11:52</span>
          <svg class="wifi" width="20" height="17"><path d="M.8 5.500Q10-2.500 19.200 5.500" fill="none" stroke="#f2f2f2" stroke-width="1.600"/><path d="M2.500 7Q10 1 17.500 7L10 16.500z" fill="#f2f2f2"/></svg>
          <svg class="mute" width="19" height="18"><path d="M0 6h4l5-5v16l-5-5H0z" fill="#777"/><path d="M12 5q3 4 0 8M15 2.500q4.500 6.500 0 13M2 17L17 2" fill="none" stroke="#777" stroke-width="1.500"/></svg>
          <svg class="battery" width="20" height="19"><path d="M4.500 4L0 11h2.500L2 16l4-7H4z" fill="#f2f2f2"/><path d="M12 .8h3.500" stroke="#f2f2f2" stroke-width="1.500"/><rect x="8.700" y="1.700" width="10" height="16.300" rx="2.500" fill="none" stroke="#f2f2f2" stroke-width="1.400"/><rect x="10.500" y="4" width="6.500" height="12" rx="1" fill="#f2f2f2"/></svg>
          <div class="edge"></div>
        </div>
      </footer>`;
  }
}
